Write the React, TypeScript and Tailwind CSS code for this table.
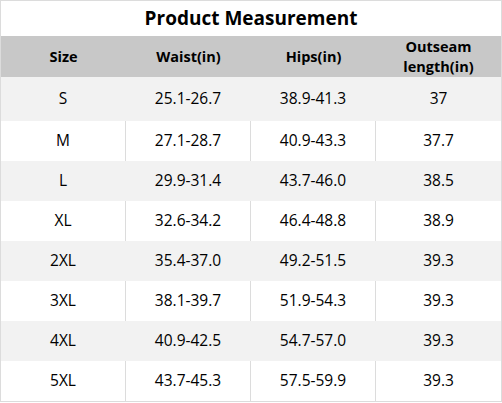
const rows = [
  ["S", "25.1-26.7", "38.9-41.3", "37"],
  ["M", "27.1-28.7", "40.9-43.3", "37.7"],
  ["L", "29.9-31.4", "43.7-46.0", "38.5"],
  ["XL", "32.6-34.2", "46.4-48.8", "38.9"],
  ["2XL", "35.4-37.0", "49.2-51.5", "39.3"],
  ["3XL", "38.1-39.7", "51.9-54.3", "39.3"],
  ["4XL", "40.9-42.5", "54.7-57.0", "39.3"],
  ["5XL", "43.7-45.3", "57.5-59.9", "39.3"],
]

export default function App() {
  return (
    <div className="w-[502px] h-[403px] bg-white font-['Open_Sans',sans-serif] text-black">
      <div className="w-[502px] h-[402px] border border-[#dcdcdc] flex flex-col">
        <div className="h-[35px] shrink-0 flex items-center justify-center text-[19px] font-bold">
          Product Measurement
        </div>
        <div className="h-[41px] shrink-0 bg-[#c8c8c8] grid grid-cols-[125px_125px_125px_1fr] text-[14.5px] font-bold leading-[20px]">
          <div className="flex items-center justify-center">Size</div>
          <div className="flex items-center justify-center">Waist(in)</div>
          <div className="flex items-center justify-center">Hips(in)</div>
          <div className="flex items-center justify-center text-center">
            Outseam
            <br />
            length(in)
          </div>
        </div>
        {rows.map((r, i) => {
          const gray = i % 2 === 0
          return (
            <div
              key={r[0]}
              className={`${i === 0 ? "h-[44px]" : "h-[40px]"} shrink-0 grid grid-cols-[125px_125px_125px_1fr] text-[15.5px] ${gray ? "bg-[#f2f2f2]" : "bg-white"}`}
            >
              {r.map((c, j) => (
                <div
                  key={j}
                  className={`flex items-center justify-center ${j < 3 ? (gray ? "border-r border-[#f2f2f2]" : "border-r border-[#dcdcdc]") : ""}`}
                >
                  {c}
                </div>
              ))}
            </div>
          )
        })}
      </div>
    </div>
  )
}
